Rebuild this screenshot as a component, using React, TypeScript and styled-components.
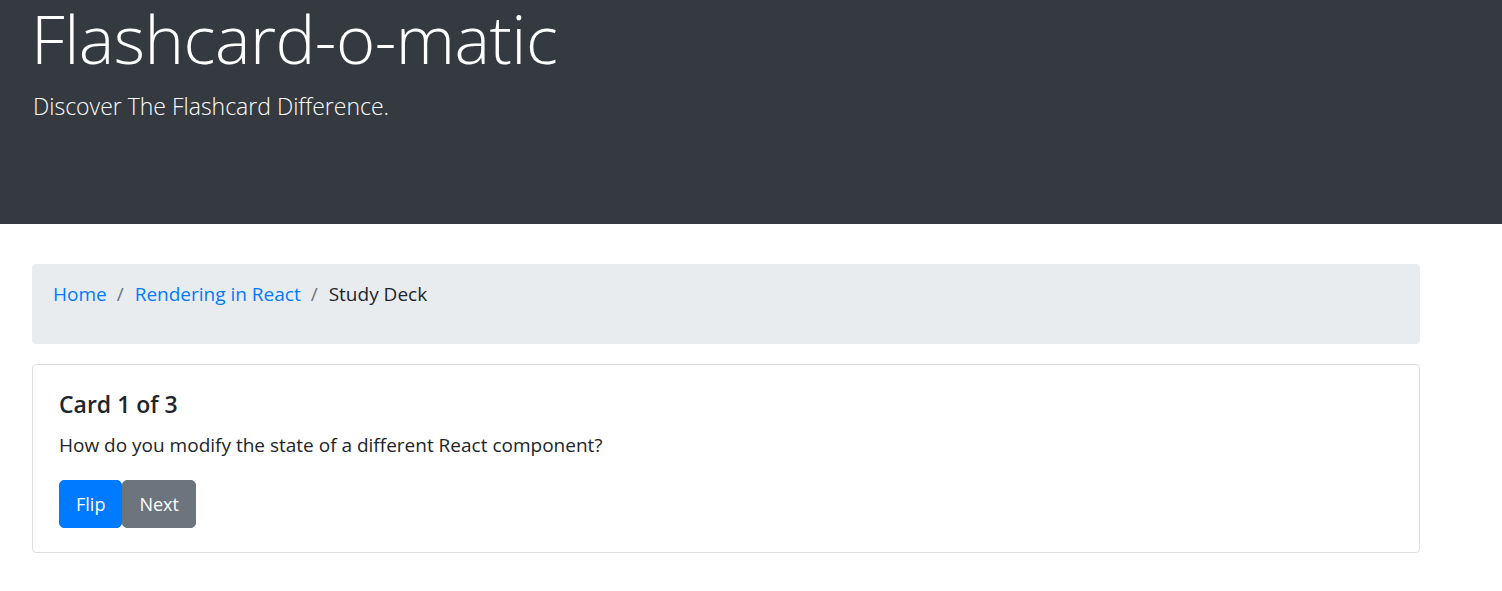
import React from "react";
import styled, { createGlobalStyle } from "styled-components";

const GlobalStyle = createGlobalStyle`
  html, body { margin: 0; padding: 0; background: #fff; }
  body {
    font-family: "Open Sans", "Noto Sans", "Liberation Sans", sans-serif;
    color: #212529;
    -webkit-font-smoothing: antialiased;
  }
  * { box-sizing: border-box; }
`;

const Jumbotron = styled.header`
  background: #343a40;
  color: #fff;
  height: 224px;
  padding: 5px 33px 0;
`;

const Title = styled.h1`
  margin: 0 0 0 -2px;
  font-size: 67px;
  line-height: 67px;
  font-weight: 300;
  letter-spacing: -0.5px;
`;

const Lead = styled.p`
  margin: 17px 0 0;
  font-size: 23px;
  line-height: 34.5px;
  font-weight: 300;
`;

const Main = styled.main`
  width: 1388px;
  margin: 40px 0 0 32px;
  display: flex;
  flex-direction: column;
  gap: 20px;
`;

const Breadcrumb = styled.ol`
  list-style: none;
  margin: 0;
  height: 80px;
  padding: 17px 21px 0;
  background: #e9ecef;
  border-radius: 4px;
  display: flex;
  align-items: flex-start;
  font-size: 19px;
  line-height: 27px;
`;

const Crumb = styled.li<{ $first?: boolean; $active?: boolean }>`
  color: ${(p) => (p.$active ? "#212529" : "#007bff")};
  &::before {
    content: ${(p) => (p.$first ? "none" : '"/"')};
    color: #6c757d;
    padding: 0 11px 0 10px;
  }
`;

const CrumbLink = styled.a`
  color: #007bff;
  text-decoration: none;
`;

const Card = styled.section`
  border: 1px solid rgba(0, 0, 0, 0.125);
  border-radius: 4px;
  padding: 24px 26px 24px;
`;

const CardTitle = styled.h5`
  margin: 0;
  font-size: 23px;
  line-height: 31px;
  font-weight: 600;
`;

const CardText = styled.p`
  margin: 12px 0 21px;
  font-size: 19px;
  line-height: 27px;
`;

const ButtonRow = styled.div`
  display: flex;
`;

const Button = styled.button<{ $variant: "primary" | "secondary" }>`
  font-family: inherit;
  font-size: 18px;
  line-height: 30px;
  padding: 8px 16px;
  border: 1px solid ${(p) => (p.$variant === "primary" ? "#007bff" : "#6c757d")};
  background: ${(p) => (p.$variant === "primary" ? "#007bff" : "#6c757d")};
  color: #fff;
  border-radius: 5px;
  cursor: pointer;
`;

export default function App() {
  return (
    <>
      <GlobalStyle />
      <Jumbotron>
        <Title>Flashcard-o-matic</Title>
        <Lead>Discover The Flashcard Difference.</Lead>
      </Jumbotron>
      <Main>
        <nav>
          <Breadcrumb>
            <Crumb $first>
              <CrumbLink href="#">Home</CrumbLink>
            </Crumb>
            <Crumb>
              <CrumbLink href="#">Rendering in React</CrumbLink>
            </Crumb>
            <Crumb $active>Study Deck</Crumb>
          </Breadcrumb>
        </nav>
        <Card>
          <CardTitle>Card 1 of 3</CardTitle>
          <CardText>How do you modify the state of a different React component?</CardText>
          <ButtonRow>
            <Button $variant="primary">Flip</Button>
            <Button $variant="secondary">Next</Button>
          </ButtonRow>
        </Card>
      </Main>
    </>
  );
}
